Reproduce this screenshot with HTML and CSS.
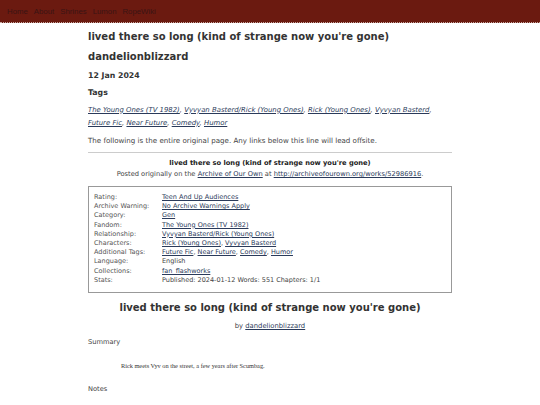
FILE: index.html
```html
<!DOCTYPE html>
<html>
<head>
<meta charset="utf-8">
<link rel="stylesheet" href="styles.css">
</head>
<body>
<nav class="nav">
  <a href="#">Home</a>
  <a href="#">About</a>
  <a href="#">Shrines</a>
  <a href="#">Lumon</a>
  <a href="#">RopeWiki</a>
</nav>
<main class="page">
  <h1 class="h-title">lived there so long (kind of strange now you're gone)</h1>
  <h2 class="h-author">dandelionblizzard</h2>
  <h3 class="h-date">12 Jan 2024</h3>
  <h3 class="h-tags">Tags</h3>
  <p class="tags"><a href="#">The Young Ones (TV 1982)</a>, <a href="#">Vyvyan Basterd/Rick (Young Ones)</a>, <a href="#">Rick (Young Ones)</a>, <a href="#">Vyvyan Basterd</a>, <a href="#">Future Fic</a>, <a href="#">Near Future</a>, <a href="#">Comedy</a>, <a href="#">Humor</a></p>
  <p class="note">The following is the entire original page. Any links below this line will lead offsite.</p>
  <hr class="rule">
  <div class="meta-head">
    <p class="meta-title">lived there so long (kind of strange now you're gone)</p>
    <p class="meta-posted">Posted originally on the <a href="#">Archive of Our Own</a> at <a href="#">http://archiveofourown.org/works/52986916</a>.</p>
  </div>
  <div class="box">
    <dl class="meta">
      <dt>Rating:</dt><dd><a href="#">Teen And Up Audiences</a></dd>
      <dt>Archive Warning:</dt><dd><a href="#">No Archive Warnings Apply</a></dd>
      <dt>Category:</dt><dd><a href="#">Gen</a></dd>
      <dt>Fandom:</dt><dd><a href="#">The Young Ones (TV 1982)</a></dd>
      <dt>Relationship:</dt><dd><a href="#">Vyvyan Basterd/Rick (Young Ones)</a></dd>
      <dt>Characters:</dt><dd><a href="#">Rick (Young Ones)</a>, <a href="#">Vyvyan Basterd</a></dd>
      <dt>Additional Tags:</dt><dd><a href="#">Future Fic</a>, <a href="#">Near Future</a>, <a href="#">Comedy</a>, <a href="#">Humor</a></dd>
      <dt>Language:</dt><dd>English</dd>
      <dt>Collections:</dt><dd><a href="#">fan_flashworks</a></dd>
      <dt>Stats:</dt><dd>Published: 2024-01-12 Words: 551 Chapters: 1/1</dd>
    </dl>
  </div>
  <h2 class="work-title">lived there so long (kind of strange now you're gone)</h2>
  <p class="byline">by <a href="#">dandelionblizzard</a></p>
  <p class="label">Summary</p>
  <blockquote class="summary">Rick meets Vyv on the street, a few years after Scumbag.</blockquote>
  <p class="label label-notes">Notes</p>
</main>
</body>
</html>
```

FILE: styles.css
```css
html, body {
  margin: 0;
  padding: 0;
  background: #ffffff;
}
body {
  font-family: "DejaVu Sans", sans-serif;
  color: #333333;
}
a {
  color: #2a3a5a;
}
.nav {
  background: #6b1a10;
  height: 22px;
  border-bottom: 1px dotted #c9a8a0;
  display: flex;
  align-items: center;
  gap: 6px;
  padding-left: 7px;
  font-family: "Liberation Sans", sans-serif;
  font-size: 7.8px;
}
.nav a {
  color: #3a1414;
  text-decoration: none;
}
.page {
  width: 364px;
  margin: 0 auto;
  padding-top: 7px;
}
.h-title, .h-author {
  font-size: 10px;
  font-weight: bold;
  margin: 0;
  line-height: 14px;
  color: #333;
}
.h-author {
  margin-top: 6px;
}
.h-date, .h-tags {
  font-size: 7.8px;
  font-weight: bold;
  margin: 0;
  line-height: 10px;
  color: #333;
}
.h-date {
  margin-top: 7px;
}
.h-tags {
  margin-top: 7px;
}
.tags {
  font-size: 6.9px;
  font-style: italic;
  line-height: 13px;
  margin: 5.5px 0 0 0;
}
.note {
  font-size: 7.1px;
  line-height: 10px;
  margin: 6.5px 0 0 0;
  color: #444;
}
.rule {
  border: 0;
  border-top: 1px solid #cccccc;
  margin: 6px 0 0 0;
}
.meta-head {
  text-align: center;
  margin-top: 5px;
}
.meta-title {
  font-size: 6.7px;
  font-weight: bold;
  margin: 0;
  line-height: 10px;
  color: #222;
}
.meta-posted {
  font-size: 6.7px;
  margin: 1px 0 0 0;
  line-height: 10px;
  color: #444;
}
.box {
  border: 1px solid #999999;
  margin-top: 7px;
  padding: 6px 5px 7px 5px;
}
.meta {
  display: grid;
  grid-template-columns: 68px 1fr;
  margin: 0;
  font-size: 6.5px;
  line-height: 9.2px;
  color: #444;
}
.meta dt {
  color: #555;
}
.meta dt, .meta dd {
  margin: 0;
}
.work-title {
  text-align: center;
  font-size: 10px;
  font-weight: bold;
  margin: 8px 0 0 0;
  line-height: 14px;
  color: #333;
}
.byline {
  text-align: center;
  font-size: 6.8px;
  margin: 6px 0 0 0;
  line-height: 10px;
  color: #444;
}
.label {
  font-size: 6.7px;
  margin: 6px 0 0 0;
  line-height: 10px;
  color: #444;
}
.summary {
  font-family: "Liberation Serif", serif;
  font-size: 6.3px;
  margin: 14px 0 0 33px;
  line-height: 10px;
  color: #333;
}
.label-notes {
  margin-top: 13px;
}
```
